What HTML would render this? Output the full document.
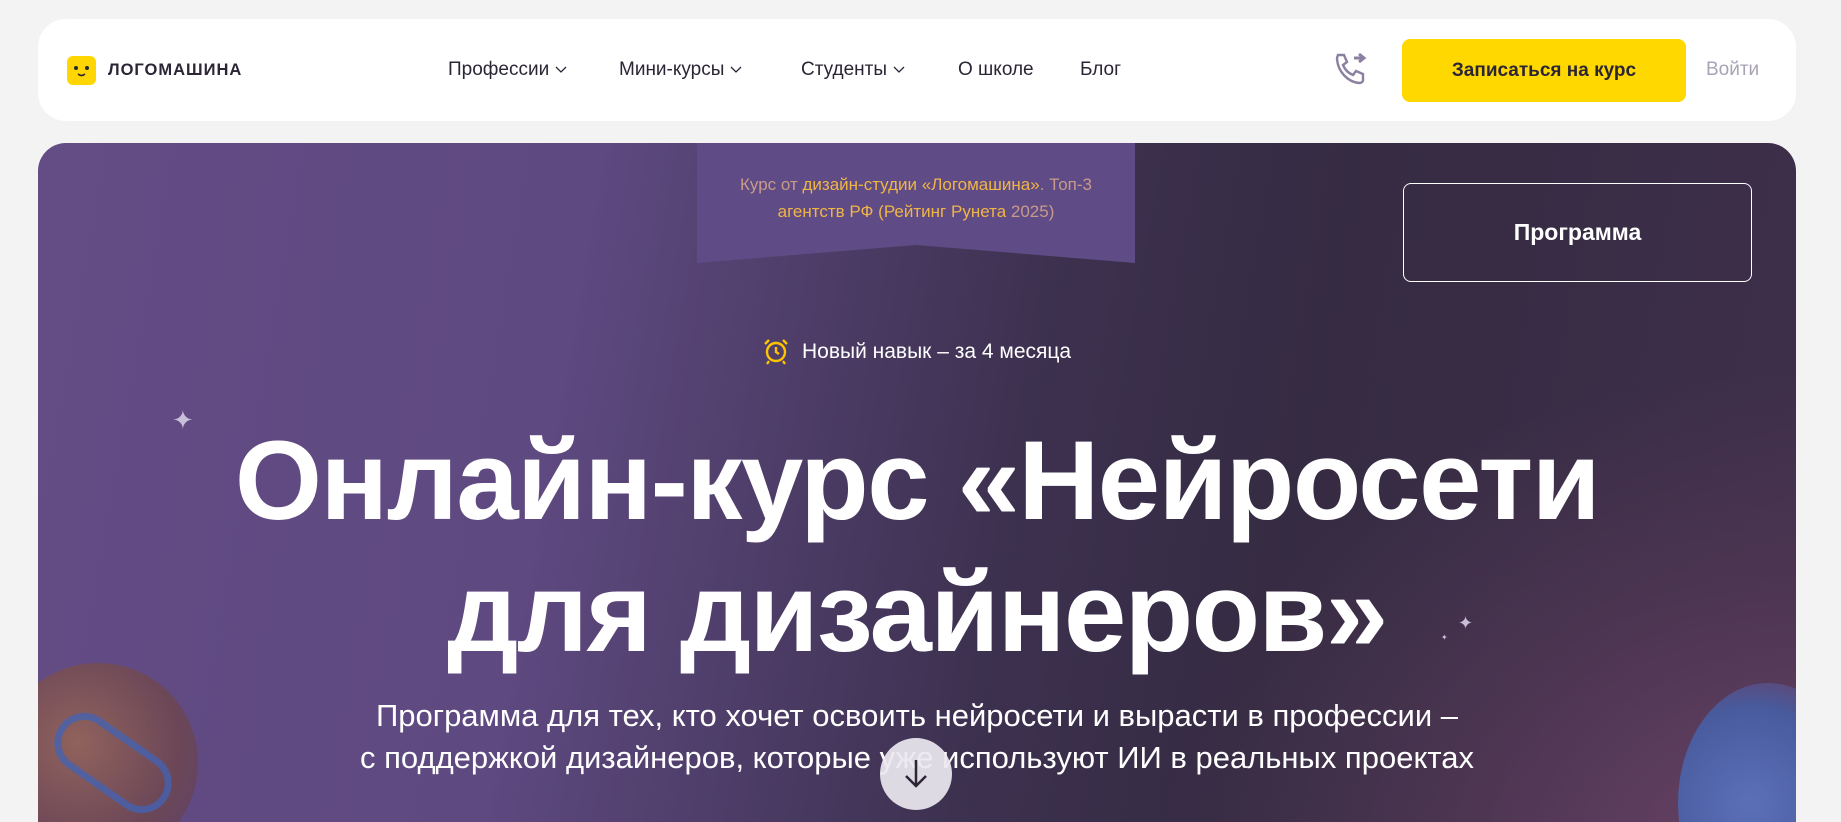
<!DOCTYPE html>
<html><head><meta charset="utf-8"><style>
*{margin:0;padding:0;box-sizing:border-box}
html,body{width:1841px;height:822px;overflow:hidden}
body{background:#f3f3f4;font-family:"Liberation Sans",sans-serif;position:relative}
.hdr{position:absolute;left:38px;top:19px;width:1758px;height:102px;background:#fff;border-radius:28px}
.logo{position:absolute;left:67px;top:56px;width:29px;height:29px;background:#ffd600;border-radius:6px}
.logot{position:absolute;left:108px;top:61px;font-size:16.5px;font-weight:bold;color:#2b2535;letter-spacing:1px}
.nav{position:absolute;top:59px;font-size:19px;color:#2b2535}
.nav svg{vertical-align:middle;margin-left:6px}
.btn{position:absolute;left:1402px;top:39px;width:284px;height:63px;background:#ffd800;border-radius:8px;font-size:19px;font-weight:bold;color:#2b2535;text-align:center;line-height:63px}
.in{position:absolute;left:1706px;top:59px;font-size:19px;color:#a8a3b5}
.hero{position:absolute;left:38px;top:143px;width:1758px;height:679px;border-radius:28px 28px 0 0;overflow:hidden;
background:radial-gradient(ellipse 900px 700px at 1750px 720px,#6a4266 0%,rgba(90,60,90,.5) 40%,rgba(0,0,0,0) 70%),linear-gradient(100deg,#644c85 0%,#5e4980 30%,#3d3150 55%,#352b42 70%,#3f2f4b 100%)}
.badge{position:absolute;left:659px;top:0;width:438px;height:120px;background:#5f4b85;clip-path:polygon(0 0,100% 0,100% 100%,50% 85%,0 100%)}
.bt{position:absolute;left:659px;top:28px;width:438px;text-align:center;font-size:17px;line-height:27px;color:#c99a8a}
.bt b{font-weight:normal;color:#f0b545}
.prog{position:absolute;left:1365px;top:40px;width:349px;height:99px;border:1.5px solid #fff;border-radius:8px;color:#fff;font-size:23px;font-weight:bold;text-align:center;line-height:96px}
.skill{position:absolute;left:764px;top:197px;font-size:21px;color:#fff}
.skill svg{position:absolute;left:-40px;top:-3px}
h1{position:absolute;left:0;width:1758px;top:272px;text-align:center;color:#fff;font-size:112px;font-weight:bold;line-height:132px;letter-spacing:-1.5px}
.sub{position:absolute;left:0;width:1758px;top:552px;text-align:center;color:#fff;font-size:31px;line-height:42px}
.arrow{position:absolute;left:842px;top:595px;width:72px;height:72px;border-radius:50%;background:rgba(235,232,240,.92)}
.spk{position:absolute;color:#c9bfd9}
</style></head><body>
<div class="hdr"></div>
<div class="logo"><svg width="29" height="29"><circle cx="9" cy="12" r="2" fill="#2b2535"/><circle cx="20" cy="12" r="2" fill="#2b2535"/><path d="M11 18 q3.5 3 7 0" stroke="#2b2535" stroke-width="1.6" fill="none"/></svg></div>
<div class="logot">ЛОГОМАШИНА</div>
<div class="nav" style="left:448px">Профессии<svg width="12" height="8"><path d="M1 1l5 5 5-5" stroke="#2b2535" fill="none" stroke-width="1.3"/></svg></div>
<div class="nav" style="left:619px">Мини-курсы<svg width="12" height="8"><path d="M1 1l5 5 5-5" stroke="#2b2535" fill="none" stroke-width="1.3"/></svg></div>
<div class="nav" style="left:801px">Студенты<svg width="12" height="8"><path d="M1 1l5 5 5-5" stroke="#2b2535" fill="none" stroke-width="1.3"/></svg></div>
<div class="nav" style="left:958px">О школе</div>
<div class="nav" style="left:1080px">Блог</div>
<svg style="position:absolute;left:1334px;top:52px" width="36" height="34" viewBox="0 0 36 34"><path d="M4 3h6l3 7-4 3c2 5 5 8 10 10l3-4 7 3v6c0 2-2 3-4 3C14 30 4 20 3 7c0-2 1-4 1-4z" fill="none" stroke="#8c80a0" stroke-width="2.4"/><path d="M20 6h8M25 2l5 4-5 4" stroke="#8c80a0" stroke-width="3" fill="none"/></svg>
<div class="btn">Записаться на курс</div>
<div class="in">Войти</div>
<div class="hero">
<div class="badge"></div>
<div class="bt">Курс от <b>дизайн-студии «Логомашина»</b>. Топ-3<br><b>агентств РФ (Рейтинг Рунета</b> 2025)</div>
<div class="prog">Программа</div>
<div class="skill"><svg width="28" height="28" viewBox="0 0 28 28"><circle cx="14" cy="15" r="9" fill="none" stroke="#ffc400" stroke-width="2.4"/><path d="M14 10v5l3 2M3 7l4-4M25 7l-4-4M7 24l-2 3M21 24l2 3" stroke="#ffc400" stroke-width="2.4" fill="none"/></svg>Новый навык – за 4 месяца</div>
<div class="spk" style="left:134px;top:262px;font-size:26px">✦</div>
<div class="spk" style="left:1420px;top:470px;font-size:18px">✦</div>
<div class="spk" style="left:1403px;top:490px;font-size:8px">✦</div>
<h1>Онлайн-курс «Нейросети<br>для дизайнеров»</h1>
<div style="position:absolute;left:-40px;top:520px;width:200px;height:200px;border-radius:50%;background:radial-gradient(circle at 40% 40%,#a06a50,#6e4548 60%,#5b3e6a);opacity:.75"></div>
<div style="position:absolute;left:10px;top:590px;width:130px;height:60px;border:7px solid #4163b5;border-radius:30px;transform:rotate(35deg);opacity:.75"></div>
<div style="position:absolute;left:1640px;top:540px;width:180px;height:240px;border-radius:50%;background:radial-gradient(circle at 40% 50%,#5a78c8,#4560a8 60%,#7a3550);opacity:.85"></div>
<div class="sub">Программа для тех, кто хочет освоить нейросети и вырасти в профессии –<br>с поддержкой дизайнеров, которые уже используют ИИ в реальных проектах</div>
<div class="arrow"><svg width="72" height="72"><path d="M36 22v26M26 38l10 10 10-10" stroke="#2b2535" stroke-width="2.5" fill="none"/></svg></div>
</div>
</body></html>
